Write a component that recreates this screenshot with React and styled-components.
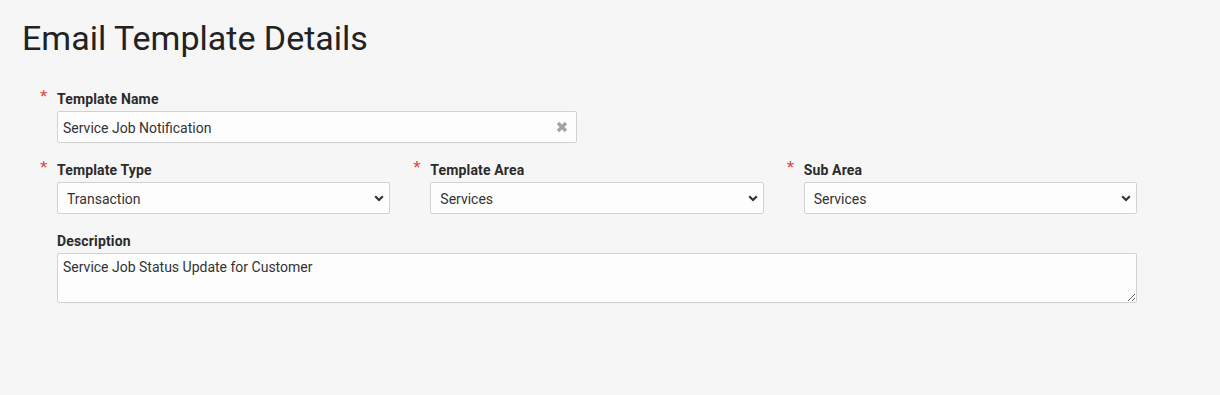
import React from "react";
import styled, { createGlobalStyle } from "styled-components";

const GlobalStyle = createGlobalStyle`
  html, body { margin: 0; padding: 0; background: #f6f6f6; }
  body { font-family: Roboto, "Liberation Sans", Arial, sans-serif; color: #333; }
  * { box-sizing: border-box; }
`;

const Page = styled.div`
  width: 1220px;
  height: 395px;
  padding: 18px 0 0 22px;
  background: #f6f6f6;
`;

const Title = styled.h1`
  margin: 0;
  font-size: 34px;
  line-height: 40px;
  font-weight: 400;
  color: #222;
`;

const Form = styled.div`
  margin: 31px 0 0 18px;
  width: 1120px;
  display: grid;
  grid-template-columns: repeat(6, 1fr);
  row-gap: 17px;
`;

const Field = styled.div`
  grid-column: span ${(p) => p.$span};
  display: grid;
  grid-template-columns: 17px 1fr;
  padding-right: 23px;
`;

const Marker = styled.span`
  color: #e0403a;
  font-size: 19px;
  line-height: 13px;
  padding-top: 1px;
  font-family: "Liberation Sans", Arial, sans-serif;
`;

const Body = styled.div`
  display: flex;
  flex-direction: column;
  gap: 2px;
`;

const Label = styled.label`
  font-size: 14px;
  line-height: 20px;
  font-weight: 700;
  color: #2b2b2b;
  letter-spacing: 0.15px;
`;

const ControlWrap = styled.div`
  position: relative;
`;

const controlBase = `
  width: 100%;
  display: block;
  border: 1px solid #d2d2d2;
  border-radius: 2px;
  background: #fdfdfd;
  font-family: Roboto, "Liberation Sans", Arial, sans-serif;
  font-size: 14px;
  color: #333;
  outline: none;
`;

const TextInput = styled.input`
  ${controlBase}
  height: 32px;
  padding: 1px 30px 0 5px;
`;

const Select = styled.select`
  ${controlBase}
  height: 32px;
  padding: 1px 26px 0 9px;
  appearance: none;
  -webkit-appearance: none;
`;

const TextArea = styled.textarea`
  ${controlBase}
  height: 50px;
  padding: 4px 5px;
  line-height: 18px;
  resize: vertical;
`;

const ClearIcon = styled.svg`
  position: absolute;
  right: 9px;
  top: 10px;
  width: 12px;
  height: 12px;
`;

const Chevron = styled.svg`
  position: absolute;
  right: 6px;
  top: 13px;
  width: 10px;
  height: 7px;
  pointer-events: none;
`;

const Req = ({ on }) => <Marker>{on ? "*" : ""}</Marker>;

const SelectField = ({ label, value }) => (
  <Field $span={2}>
    <Req on />
    <Body>
      <Label>{label}</Label>
      <ControlWrap>
        <Select defaultValue={value}>
          <option>{value}</option>
        </Select>
        <Chevron viewBox="0 0 10 7">
          <path d="M1.2 1.2 L5 5 L8.8 1.2" fill="none" stroke="#333" strokeWidth="2.2" />
        </Chevron>
      </ControlWrap>
    </Body>
  </Field>
);

export default function App() {
  return (
    <Page>
      <GlobalStyle />
      <Title>Email Template Details</Title>
      <Form>
        <Field $span={3}>
          <Req on />
          <Body>
            <Label>Template Name</Label>
            <ControlWrap>
              <TextInput defaultValue="Service Job Notification" />
              <ClearIcon viewBox="0 0 12 12">
                <path d="M2 2 L10 10 M10 2 L2 10" stroke="#a3a3a3" strokeWidth="3.2" />
              </ClearIcon>
            </ControlWrap>
          </Body>
        </Field>
        <Field $span={3} />
        <SelectField label="Template Type" value="Transaction" />
        <SelectField label="Template Area" value="Services" />
        <SelectField label="Sub Area" value="Services" />
        <Field $span={6}>
          <Req />
          <Body>
            <Label>Description</Label>
            <TextArea defaultValue="Service Job Status Update for Customer" />
          </Body>
        </Field>
      </Form>
    </Page>
  );
}
